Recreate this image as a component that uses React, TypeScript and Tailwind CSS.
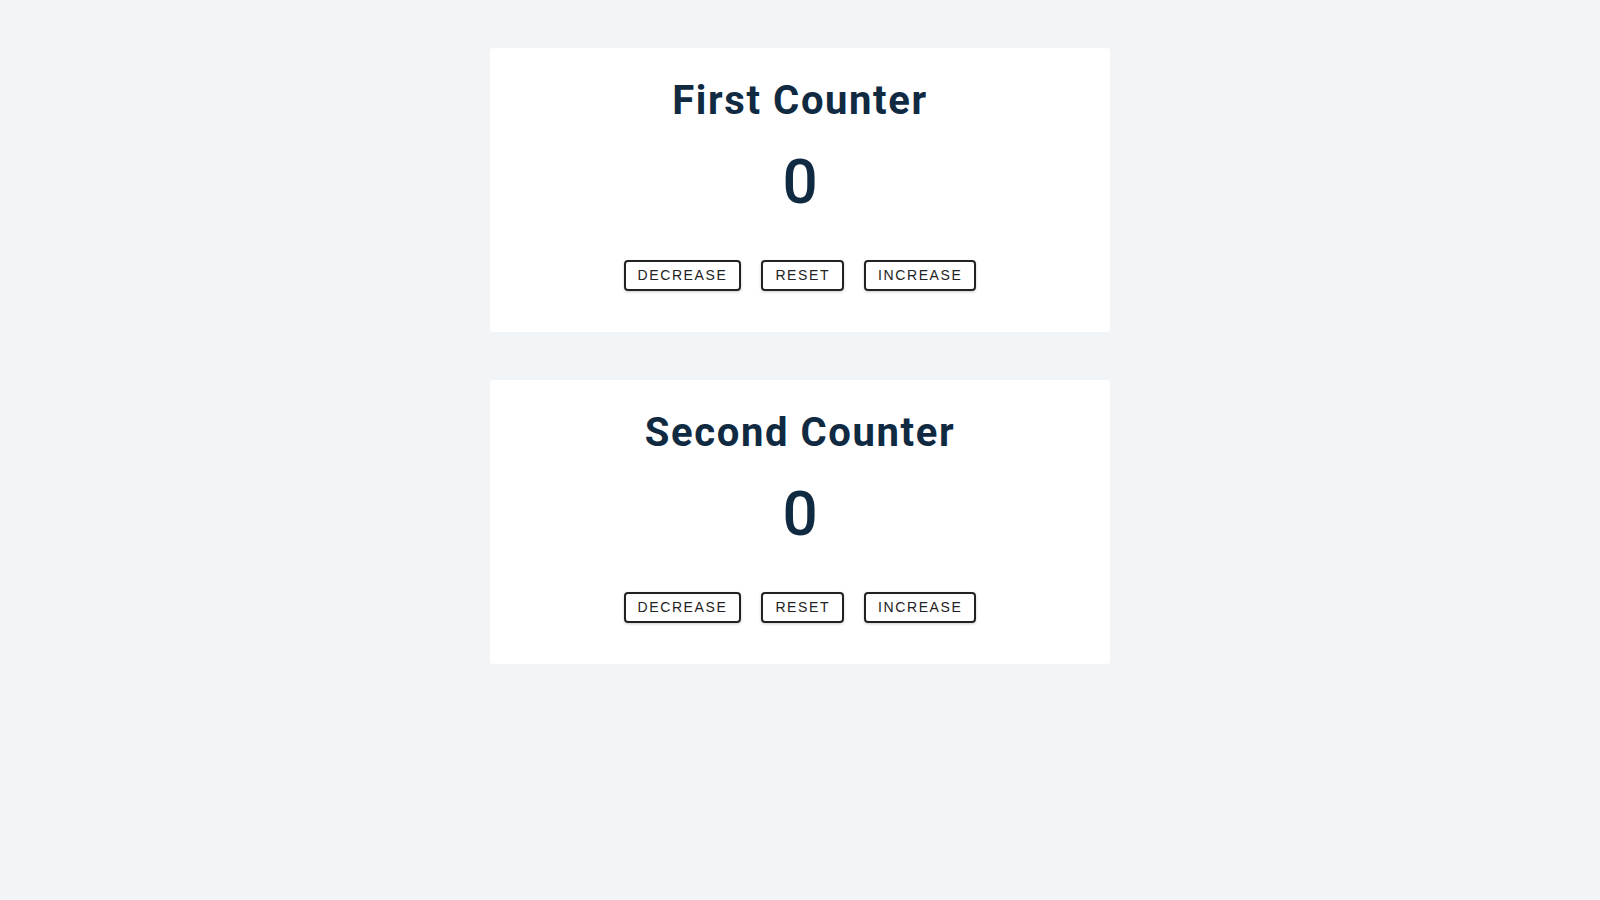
import { useState } from 'react';

function Counter({ title }: { title: string }) {
    const [value, setValue] = useState(0);

    return (
        <div className="bg-white rounded-[4px] w-[620px] mx-auto pt-[28px] pb-[41px] text-center">
            <h2 className="font-['Roboto',sans-serif] font-bold text-[40px] leading-[50px] tracking-[1.6px] text-[#102a42] mb-[16px]">
                {title}
            </h2>
            <span className="block font-['Roboto',sans-serif] font-medium text-[62px] leading-[80px] text-[#102a42] mb-[38px]">
                {value}
            </span>
            <div className="flex justify-center gap-[20px]">
                <button className="btn" onClick={() => setValue(value - 1)}>decrease</button>
                <button className="btn" onClick={() => setValue(0)}>reset</button>
                <button className="btn" onClick={() => setValue(value + 1)}>increase</button>
            </div>
        </div>
    );
}

export default function App() {
    return (
        <div className="min-h-screen bg-[#f1f5f8] pt-[48px] flex flex-col gap-[48px] font-['Roboto',sans-serif]">
            <style>{`
                .btn {
                    text-transform: uppercase;
                    background: transparent;
                    color: #222;
                    font-family: 'Liberation Sans', Arial, sans-serif;
                    padding: 6px 12px;
                    font-size: 14px;
                    line-height: 15px;
                    letter-spacing: 1.6px;
                    border: 2px solid #222;
                    border-radius: 4px;
                    box-shadow: 0 1px 3px rgba(0, 0, 0, 0.2);
                    cursor: pointer;
                }
            `}</style>
            <Counter title="First Counter" />
            <Counter title="Second Counter" />
        </div>
    );
}
